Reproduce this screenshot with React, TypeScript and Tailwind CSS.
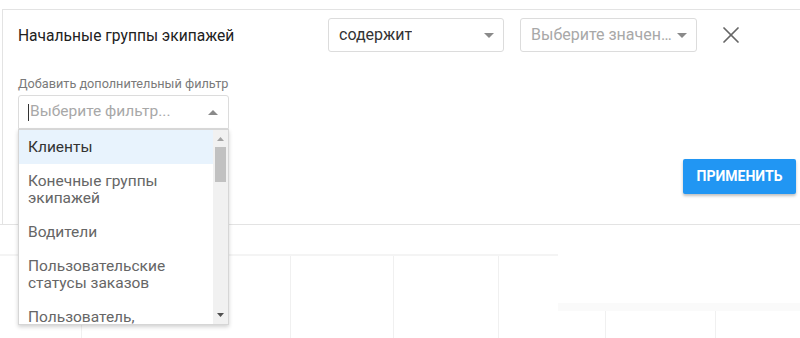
import { X } from "lucide-react";

const items = [
  "Клиенты",
  "Конечные группы экипажей",
  "Водители",
  "Пользовательские статусы заказов",
  "Пользователь, создавший заказ",
];

function Caret({ up = false, className = "" }: { up?: boolean; className?: string }) {
  return (
    <svg width="10" height="5" viewBox="0 0 10 5" className={className}>
      <path d={up ? "M0 5 L5 0 L10 5 Z" : "M0 0 L10 0 L5 5 Z"} fill="currentColor" />
    </svg>
  );
}

function Select({ value, placeholder }: { value?: string; placeholder?: string }) {
  return (
    <div className="flex h-[34px] items-center justify-between rounded-[3px] border border-[#dcdcdc] bg-white pl-[10px] pr-[9px]">
      <span
        className={`max-w-[147px] truncate text-[16px] ${value ? "text-[#333]" : "text-[#a8a8a8]"}`}
      >
        {value ?? placeholder}
      </span>
      <Caret className="ml-1 shrink-0 text-[#8a8a8a]" />
    </div>
  );
}

export default function App() {
  return (
    <div
      className="relative h-[338px] w-[800px] overflow-hidden bg-white"
      style={{ fontFamily: "Roboto, 'Noto Sans', sans-serif" }}
    >
      {/* Filter panel */}
      <div className="ml-[2px] mt-[9px] h-[215px] border-l border-t border-[#e3e3e3] pl-[15px] pr-[4px] pt-[8px]">
        <div className="flex items-center">
          <div className="w-[310px] pt-[4px] text-[15.6px] text-[#212121]">Начальные группы экипажей</div>
          <div className="w-[176px]">
            <Select value="содержит" />
          </div>
          <div className="ml-[16px] w-[177px]">
            <Select placeholder="Выберите значения..." />
          </div>
          <button className="ml-[20px] text-[#666]">
            <X size={28} strokeWidth={1.5} />
          </button>
        </div>

        <div className="mt-[24px] text-[12.7px] leading-[16px] text-[#7a7a7a]">
          Добавить дополнительный фильтр
        </div>

        <div className="relative mt-[3px] w-[211px]">
          <div className="flex h-[34px] items-center justify-between rounded-t-[3px] border border-[#dcdcdc] pl-[9px] pr-[10px]">
            <div className="flex items-center">
              <span className="mr-[1px] h-[17px] w-px bg-[#333]" />
              <span className="text-[15.5px] text-[#a8a8a8]">Выберите фильтр...</span>
            </div>
            <Caret up className="text-[#8a8a8a]" />
          </div>

          {/* Dropdown list */}
          <div className="absolute left-0 top-[34px] z-10 flex h-[196px] w-[211px] border border-[#d6d6d6] bg-white shadow-[0_2px_4px_rgba(0,0,0,0.18)]">
            <div className="flex-1 overflow-hidden">
              {items.map((it, i) => (
                <div
                  key={it}
                  className={`px-[9px] py-[8.5px] text-[15.5px] leading-[17px] ${
                    i === 0 ? "bg-[#e8f3fd] text-[#333]" : "text-[#666]"
                  }`}
                >
                  {it}
                </div>
              ))}
            </div>
            <div className="flex w-[15px] flex-col items-center bg-[#f1f1f1]">
              <svg width="7" height="4" viewBox="0 0 7 4" className="mt-[7px] text-[#a3a3a3]">
                <path d="M0 4 L3.5 0 L7 4 Z" fill="currentColor" />
              </svg>
              <div className="mt-[6px] h-[35px] w-[11px] bg-[#c1c1c1]" />
              <div className="flex-1" />
              <svg width="7" height="4" viewBox="0 0 7 4" className="mb-[7px] text-[#505050]">
                <path d="M0 0 L7 0 L3.5 4 Z" fill="currentColor" />
              </svg>
            </div>
          </div>
        </div>

        <div className="mt-[30px] flex justify-end">
          <button className="h-[35px] w-[113px] rounded-[2px] bg-[#2196f3] text-[14px] font-bold text-white shadow-[0_2px_3px_rgba(0,0,0,0.25)]">
            ПРИМЕНИТЬ
          </button>
        </div>
      </div>

      {/* Background grid */}
      <div className="flex h-[114px] border-t border-[#e3e3e3]">
        <div className="w-[558px]">
          <div className="h-[29px]" />
          <div className="flex h-full border-t-[2px] border-[#f4f4f4]">
            <div className="w-[82px] border-r border-[#f0f0f0]" />
            <div className="w-[209px] border-r border-[#f0f0f0]" />
            <div className="w-[103px] border-r border-[#f0f0f0]" />
            <div className="w-[105px] border-r border-[#f0f0f0]" />
            <div className="flex-1" />
          </div>
        </div>
        <div className="flex-1">
          <div className="h-[78px]" />
          <div className="h-[8px] bg-[#fafafa]" />
          <div className="flex h-full">
            <div className="w-[48px] border-r border-[#f0f0f0]" />
            <div className="w-[110px] border-r border-[#f0f0f0]" />
            <div className="flex-1" />
          </div>
        </div>
      </div>
    </div>
  );
}
